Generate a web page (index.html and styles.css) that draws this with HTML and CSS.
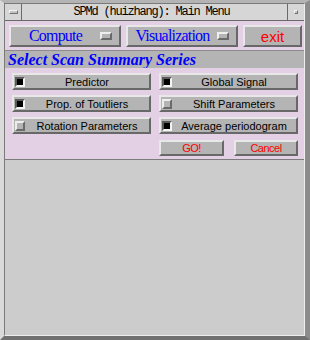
FILE: index.html
```html
<!DOCTYPE html>
<html lang="en">
	<head>
		<meta charset="UTF-8" />
		<meta name="viewport" content="width=device-width, initial-scale=1.0" />
		<title>SPMd Main Menu</title>
		<link rel="stylesheet" href="styles.css">
	</head>
	<body>
		<div class="window">
			<div class="inner">
				<div class="titlebar">
					<div class="tb-btn tb-left"><span class="tb-dash"></span></div>
					<div class="title">SPMd (huizhang): Main Menu</div>
					<div class="tb-btn tb-right"><span class="tb-dot"></span></div>
				</div>
				<div class="menubar">
					<div class="mbtn">
						<span class="mlabel">Compute</span>
						<span class="cascade"></span>
					</div>
					<div class="mbtn">
						<span class="mlabel">Visualization</span>
						<span class="cascade"></span>
					</div>
					<div class="mbtn exit">exit</div>
				</div>
				<div class="header">Select Scan Summary Series</div>
				<div class="panel">
					<div class="options">
						<div class="opt"><span class="check on"></span><span class="olabel">Predictor</span></div>
						<div class="opt"><span class="check on"></span><span class="olabel">Global Signal</span></div>
						<div class="opt"><span class="check on"></span><span class="olabel">Prop. of Toutliers</span></div>
						<div class="opt"><span class="check"></span><span class="olabel">Shift Parameters</span></div>
						<div class="opt"><span class="check"></span><span class="olabel">Rotation Parameters</span></div>
						<div class="opt"><span class="check on"></span><span class="olabel">Average periodogram</span></div>
						<div class="actions">
							<div class="abtn go">GO!</div>
							<div class="abtn cancel">Cancel</div>
						</div>
					</div>
				</div>
				<div class="empty"></div>
			</div>
		</div>
	</body>
</html>
```

FILE: styles.css
```css
body {
	margin: 0;
	background: #cccccc;
}
.window {
	width: 310px;
	height: 340px;
	box-sizing: border-box;
	border-style: solid;
	border-width: 3px 5px 4px 4px;
	border-color: #b4b4b4 #8c8c8c #707070 #dadada;
	background: #cccccc;
}
.inner {
	height: 100%;
	box-sizing: border-box;
	border: 1px solid;
	border-color: #7a7a7a #eeeeee #eeeeee #7a7a7a;
	display: flex;
	flex-direction: column;
}
.titlebar {
	height: 16px;
	display: flex;
	background: #d6d6d6;
	border-bottom: 1px solid #6a6a6a;
}
.tb-btn {
	width: 16px;
	height: 16px;
	display: flex;
	align-items: center;
	justify-content: center;
	background: #d6d6d6;
}
.tb-left {
	border-right: 1px solid #6a6a6a;
}
.tb-right {
	border-left: 1px solid #6a6a6a;
}
.tb-dash {
	width: 7px;
	height: 2px;
	border: 1px solid;
	border-color: #f4f4f4 #707070 #707070 #f4f4f4;
	background: #c4c4c4;
}
.tb-dot {
	width: 2px;
	height: 2px;
	border: 1px solid;
	border-color: #f4f4f4 #707070 #707070 #f4f4f4;
	background: #c4c4c4;
}
.title {
	flex: 1;
	text-align: center;
	font-family: "Liberation Mono", monospace;
	font-size: 12px;
	letter-spacing: -1.2px;
	line-height: 16px;
	color: #000000;
	padding-right: 6px;
}
.menubar {
	height: 30px;
	box-sizing: border-box;
	display: flex;
	gap: 5px;
	padding: 4px 1px 3px 4px;
	background: #e4d0e4;
	border-bottom: 1px solid #8c8c8c;
}
.mbtn {
	width: 112px;
	box-sizing: border-box;
	display: flex;
	align-items: center;
	background: #b4b4b4;
	border: 2px solid;
	border-color: #e8e8e8 #686868 #686868 #e8e8e8;
}
.mlabel {
	flex: 1;
	text-align: center;
	font-family: "Liberation Serif", serif;
	font-size: 16px;
	letter-spacing: -0.8px;
	color: #0000ff;
}
.cascade {
	width: 8px;
	height: 4px;
	margin-right: 7px;
	border: 2px solid;
	border-color: #eeeeee #6a6a6a #6a6a6a #eeeeee;
	background: #b4b4b4;
}
.exit {
	width: 59px;
	justify-content: center;
	font-family: "Liberation Sans", sans-serif;
	font-size: 15px;
	color: #ff0000;
}
.header {
	height: 17px;
	padding-left: 3px;
	background: #b4b4b4;
	font-family: "Liberation Serif", serif;
	font-weight: bold;
	font-style: italic;
	font-size: 16px;
	line-height: 17px;
	color: #0000ff;
}
.panel {
	background: #e4d0e4;
	padding: 5px 5px 3px 7px;
	border-bottom: 1px solid #7c7c7c;
}
.options {
	display: grid;
	grid-template-columns: 139px 139px;
	column-gap: 8px;
	row-gap: 5px;
}
.opt {
	height: 17px;
	box-sizing: border-box;
	display: flex;
	align-items: center;
	background: #b4b4b4;
	border: 2px solid;
	border-color: #e8e8e8 #686868 #686868 #e8e8e8;
}
.check {
	width: 6px;
	height: 6px;
	margin-left: 1px;
	border: 2px solid;
	border-color: #eeeeee #6a6a6a #6a6a6a #eeeeee;
	background: #b4b4b4;
}
.check.on {
	border-color: #5a5a5a #f4f4f4 #f4f4f4 #5a5a5a;
	background: #000000;
}
.olabel {
	flex: 1;
	text-align: center;
	font-family: "Liberation Sans", sans-serif;
	font-size: 11px;
	color: #000000;
}
.actions {
	grid-column: 2;
	display: flex;
	gap: 10px;
	margin-top: 1px;
}
.abtn {
	height: 16px;
	box-sizing: border-box;
	display: flex;
	align-items: center;
	justify-content: center;
	background: #b4b4b4;
	border: 2px solid;
	border-color: #e8e8e8 #686868 #686868 #e8e8e8;
	font-family: "Liberation Sans", sans-serif;
	font-size: 11px;
	letter-spacing: -0.5px;
	color: #ff0000;
}
.go {
	width: 65px;
}
.cancel {
	width: 64px;
}
.empty {
	flex: 1;
	background: #cccccc;
}
```
